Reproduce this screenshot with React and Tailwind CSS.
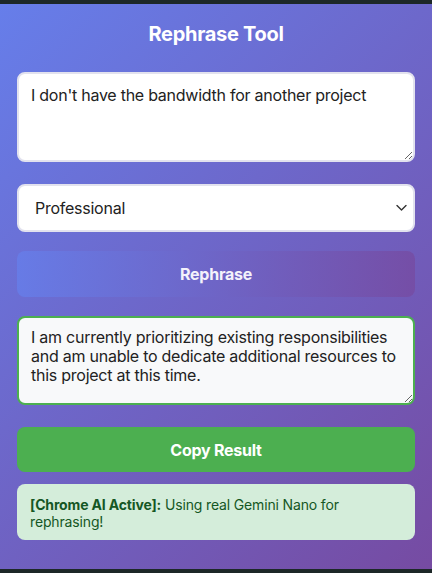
import React from "react";

export default function App() {
  const font = { fontFamily: 'Inter, "Liberation Sans", Arial, sans-serif', letterSpacing: "-0.25px" };
  return (
    <div className="w-[432px] h-[573px] flex flex-col bg-[#1d2828] overflow-hidden" style={font}>
      <div className="h-[4px] shrink-0 bg-[#1d2828]" />
      <div className="flex-1 flex flex-col px-[17px] bg-[linear-gradient(135deg,#667eea_0%,#764ba2_100%)]">
        <h1 className="mt-[18px] h-[24px] text-center text-[20px] leading-[24px] font-bold text-white tracking-[-0.3px]">
          Rephrase Tool
        </h1>
        <textarea
          className="block mt-[26px] w-full h-[90px] rounded-[8px] border-2 border-[#e2e2ee] bg-white px-3 py-3 text-[16px] leading-[19px] text-[#222] outline-none resize-y"
          style={font}
          defaultValue="I don't have the bandwidth for another project"
        />
        <div className="relative mt-[22px]">
          <select
            className="block w-full h-[48px] appearance-none rounded-[8px] border-2 border-[#e2e2ee] bg-white pl-4 pr-8 text-[16px] text-[#222] outline-none"
            style={font}
            defaultValue="Professional"
          >
            <option>Professional</option>
            <option>Casual</option>
            <option>Friendly</option>
          </select>
          <svg
            className="pointer-events-none absolute right-[8px] top-1/2 -translate-y-1/2"
            width="11"
            height="7"
            viewBox="0 0 11 7"
            fill="none"
          >
            <path d="M1 1l4.5 4.5L10 1" stroke="#333" strokeWidth="1.4" strokeLinecap="round" strokeLinejoin="round" />
          </svg>
        </div>
        <button
          className="mt-[19px] h-[46px] w-full rounded-[8px] bg-[linear-gradient(90deg,rgba(102,126,234,0.8)_0%,rgba(118,75,162,0.8)_100%)] text-[16px] font-bold text-[#f4f2fb]"
          style={font}
        >
          Rephrase
        </button>
        <textarea
          className="block mt-[19px] w-full h-[89px] rounded-[8px] border-2 border-[#4caf50] bg-[#f8f9fa] px-3 py-[10px] text-[16px] leading-[19px] text-[#222] outline-none resize-y"
          style={font}
          readOnly
          defaultValue="I am currently prioritizing existing responsibilities and am unable to dedicate additional resources to this project at this time."
        />
        <button
          className="mt-[22px] h-[45px] w-full rounded-[8px] bg-[#4caf50] text-[16px] font-bold text-white"
          style={font}
        >
          Copy Result
        </button>
        <div className="mt-[12px] h-[56px] rounded-[8px] bg-[#d4edda] px-[13px] py-[12px] text-[14px] leading-[17px] text-[#155724] tracking-[-0.15px]">
          <span className="font-bold">[Chrome AI Active]:</span> Using real Gemini Nano for rephrasing!
        </div>
      </div>
      <div className="h-[4px] shrink-0 bg-[#1d2828]" />
    </div>
  );
}
